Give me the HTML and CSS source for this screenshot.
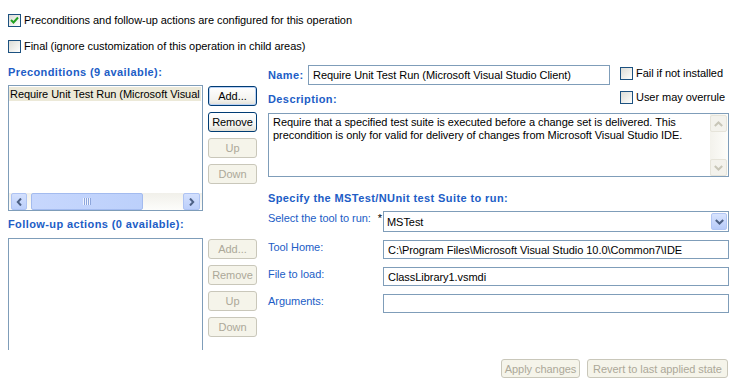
FILE: index.html
```html
<!DOCTYPE html>
<html lang="en">
<head>
    <meta charset="UTF-8">
    <meta name="viewport" content="width=device-width, initial-scale=1.0">
    <title>Operation Behavior</title>
    <link rel="stylesheet" href="styles.css">
</head>
<body>
    <div class="page">
        <label class="check">
            <span class="box"><svg width="11" height="11" viewBox="0 0 11 11"><polyline points="2,5 4.5,7.5 9,2.5" fill="none" stroke="#21a121" stroke-width="2"/></svg></span>
            <span>Preconditions and follow-up actions are configured for this operation</span>
        </label>
        <label class="check check-final">
            <span class="box"></span>
            <span>Final (ignore customization of this operation in child areas)</span>
        </label>

        <div class="main">
            <div class="left">
                <div class="group-title first">Preconditions (9 available):</div>
                <div class="list-row">
                    <div class="list">
                        <div class="list-items">
                            <div class="item selected">Require Unit Test Run (Microsoft Visual</div>
                        </div>
                        <div class="hscroll">
                            <span class="sb-btn"><svg width="7" height="8" viewBox="0 0 7 8"><polyline points="5,0.5 1.8,4 5,7.5" fill="none" stroke="#4d6185" stroke-width="2"/></svg></span>
                            <span class="sb-thumb"><svg width="8" height="7" viewBox="0 0 8 7"><path d="M0.5 0v7M2.5 0v7M4.5 0v7M6.5 0v7" stroke="#eef3fe" stroke-width="1"/><path d="M1.5 0v7M3.5 0v7M5.5 0v7M7.5 0v7" stroke="#8da6dc" stroke-width="1"/></svg></span>
                            <span class="sb-track"></span>
                            <span class="sb-btn"><svg width="7" height="8" viewBox="0 0 7 8"><polyline points="2,0.5 5.2,4 2,7.5" fill="none" stroke="#4d6185" stroke-width="2"/></svg></span>
                        </div>
                    </div>
                    <div class="buttons">
                        <button class="btn default">Add...</button>
                        <button class="btn">Remove</button>
                        <button class="btn" disabled>Up</button>
                        <button class="btn" disabled>Down</button>
                    </div>
                </div>

                <div class="group-title second">Follow-up actions (0 available):</div>
                <div class="list-row">
                    <div class="list list-open"></div>
                    <div class="buttons">
                        <button class="btn" disabled>Add...</button>
                        <button class="btn" disabled>Remove</button>
                        <button class="btn" disabled>Up</button>
                        <button class="btn" disabled>Down</button>
                    </div>
                </div>
            </div>

            <div class="right">
                <div class="top-block">
                    <div class="top-main">
                        <div class="name-line">
                            <span class="field-title name-title">Name:</span>
                            <input class="text name-input" type="text" value="Require Unit Test Run (Microsoft Visual Studio Client)">
                        </div>
                        <div class="field-title desc-title">Description:</div>
                    </div>
                    <div class="top-checks">
                        <label class="check"><span class="box"></span><span>Fail if not installed</span></label>
                        <label class="check"><span class="box"></span><span>User may overrule</span></label>
                    </div>
                </div>

                <div class="memo">
                    <div class="memo-text">Require that a specified test suite is executed before a change set is delivered. This<br>precondition is only for valid for delivery of changes from Microsoft Visual Studio IDE.</div>
                    <div class="vscroll">
                        <span class="vs-btn"><svg width="9" height="6" viewBox="0 0 9 6"><polyline points="0.8,5 4.5,1.5 8.2,5" fill="none" stroke="#c8c6b8" stroke-width="2"/></svg></span>
                        <span class="vs-track"></span>
                        <span class="vs-btn"><svg width="9" height="6" viewBox="0 0 9 6"><polyline points="0.8,1 4.5,4.5 8.2,1" fill="none" stroke="#c8c6b8" stroke-width="2"/></svg></span>
                    </div>
                </div>

                <div class="group-title suite-title">Specify the MSTest/NUnit test Suite to run:</div>
                <div class="form">
                    <span class="form-label">Select the tool to run:<span class="req">*</span></span>
                    <div class="combo">
                        <span class="combo-value">MSTest</span>
                        <span class="combo-btn"><svg width="9" height="6" viewBox="0 0 9 6"><polyline points="0.8,1 4.5,4.5 8.2,1" fill="none" stroke="#4d6185" stroke-width="2"/></svg></span>
                    </div>
                    <span class="form-label">Tool Home:</span>
                    <input class="text" type="text" value="C:\Program Files\Microsoft Visual Studio 10.0\Common7\IDE">
                    <span class="form-label">File to load:</span>
                    <input class="text" type="text" value="ClassLibrary1.vsmdi">
                    <span class="form-label">Arguments:</span>
                    <input class="text" type="text" value="">
                </div>
            </div>
        </div>

        <div class="footer">
            <button class="btn" disabled>Apply changes</button>
            <button class="btn" disabled>Revert to last applied state</button>
        </div>
    </div>
</body>
</html>
```

FILE: styles.css
```css
body {
    margin: 0;
    font-family: "Liberation Sans", Arial, sans-serif;
    font-size: 11px;
    letter-spacing: -0.05px;
    color: #000;
    background-color: #fff;
}

.page {
    width: 737px;
    height: 381px;
    box-sizing: border-box;
    padding: 14px 8px 0;
    overflow: hidden;
}

/* checkboxes */
.check {
    display: flex;
    align-items: center;
    gap: 3px;
    height: 13px;
    line-height: 13px;
    white-space: nowrap;
}

.check-final {
    margin-top: 13px;
}

.box {
    flex: none;
    width: 13px;
    height: 13px;
    box-sizing: border-box;
    border: 1px solid #1c5180;
    background: linear-gradient(135deg, #dcdcd6, #f4f4f1 70%, #fff);
    display: flex;
}

/* layout */
.main {
    display: flex;
    margin-top: 12px;
}

.left {
    width: 249px;
}

.right {
    width: 461px;
    margin-left: 11px;
}

.group-title {
    color: #215dc6;
    font-weight: bold;
    letter-spacing: 0.4px;
    line-height: 13px;
    white-space: nowrap;
}

.group-title.first {
    margin-top: 1px;
}

.group-title.second {
    margin-top: 7px;
}

.list-row {
    display: flex;
    gap: 5px;
    margin-top: 6px;
}

.group-title.second + .list-row {
    margin-top: 7px;
}

/* list boxes */
.list {
    width: 195px;
    height: 126px;
    box-sizing: border-box;
    border: 1px solid #7f9db9;
    display: flex;
    flex-direction: column;
}

.list-open {
    height: 112px;
    border-bottom: none;
}

.list-items {
    flex: 1;
    padding: 1px 1px 0 0;
    overflow: hidden;
}

.item {
    height: 14px;
    line-height: 14px;
    padding-left: 1px;
    white-space: nowrap;
    overflow: hidden;
}

.item.selected {
    background-color: #ece9d8;
}

.hscroll {
    height: 17px;
    display: flex;
    padding: 0 2px;
    background: linear-gradient(#f1f0ea, #fdfdfb);
}

.sb-btn,
.sb-thumb {
    box-sizing: border-box;
    border: 1px solid #aec3f3;
    border-radius: 2px;
    background: linear-gradient(#d3e0fd, #bccffb);
    display: flex;
    align-items: center;
    justify-content: center;
}

.sb-btn {
    width: 16px;
}

.sb-btn:last-child {
    width: 17px;
}

.sb-thumb {
    width: 112px;
    margin-left: 4px;
    border-color: #a3bbef;
    background: linear-gradient(90deg, #c7d7fd, #bcd0fb);
}

.sb-track {
    flex: 1;
}

/* buttons */
.buttons {
    width: 49px;
    display: flex;
    flex-direction: column;
    gap: 6px;
    padding-top: 1px;
}

.btn {
    height: 20px;
    padding: 0;
    font-family: inherit;
    font-size: 11px;
    letter-spacing: -0.05px;
    color: #000;
    border: 1px solid #003c74;
    border-radius: 3px;
    background: linear-gradient(#fff, #f3f3ef 70%, #e2e0d6);
    cursor: pointer;
}

.btn.default {
    box-shadow: inset 0 0 0 1px #b9d1f5;
}

.btn:disabled {
    color: #aca899;
    border-color: #c9c7ba;
    background: #f5f4ea;
    cursor: default;
}

/* right side */
.top-block {
    display: flex;
}

.top-main {
    width: 342px;
}

.name-line {
    display: flex;
    align-items: center;
    height: 20px;
}

.field-title {
    color: #215dc6;
    font-weight: bold;
    letter-spacing: 0.4px;
    line-height: 13px;
}

.name-title {
    width: 40px;
}

.desc-title {
    margin-top: 8px;
}

.top-checks {
    margin-left: 10px;
    padding-top: 2px;
    display: flex;
    flex-direction: column;
    gap: 11px;
}

.text {
    height: 19px;
    box-sizing: border-box;
    margin: 0;
    padding: 0 4px;
    border: 1px solid #7f9db9;
    font-family: inherit;
    font-size: 11px;
    letter-spacing: -0.05px;
    color: #000;
    outline: none;
}

.name-input {
    width: 302px;
    height: 20px;
}

.memo {
    margin-top: 7px;
    height: 64px;
    box-sizing: border-box;
    border: 1px solid #7f9db9;
    display: flex;
}

.memo-text {
    flex: 1;
    padding: 2px 4px;
    line-height: 13px;
    white-space: nowrap;
    overflow: hidden;
}

.vscroll {
    width: 17px;
    padding: 1px 1px 0 0;
    display: flex;
    flex-direction: column;
    background: linear-gradient(90deg, #f3f2ec, #fdfdfa);
}

.vs-btn {
    height: 17px;
    box-sizing: border-box;
    border: 1px solid #e6e4da;
    border-radius: 2px;
    background: #f3f2ec;
    display: flex;
    align-items: center;
    justify-content: center;
}

.vs-track {
    flex: 1;
}

.suite-title {
    margin-top: 15px;
}

.form {
    display: grid;
    grid-template-columns: 115px 346px;
    row-gap: 8px;
    margin-top: 6px;
}

.form-label {
    color: #215dc6;
    line-height: 13px;
    padding-top: 1px;
    display: flex;
    justify-content: space-between;
    padding-right: 1px;
}

.req {
    color: #000;
}

.form .text {
    width: 346px;
}

.combo {
    height: 21px;
    box-sizing: border-box;
    border: 1px solid #7f9db9;
    display: flex;
    align-items: center;
    padding: 1px;
}

.combo-value {
    flex: 1;
    padding-left: 2px;
}

.combo-btn {
    width: 16px;
    height: 17px;
    box-sizing: border-box;
    border: 1px solid #b2c6f4;
    border-radius: 2px;
    background: linear-gradient(#d8e4fe, #b7cbf9);
    display: flex;
    align-items: center;
    justify-content: center;
}

.footer {
    display: flex;
    justify-content: flex-end;
    gap: 7px;
    margin-top: 9px;
    padding-right: 1px;
}

.footer .btn {
    height: 19px;
    width: 79px;
}

.footer .btn:last-child {
    width: 141px;
}
```
